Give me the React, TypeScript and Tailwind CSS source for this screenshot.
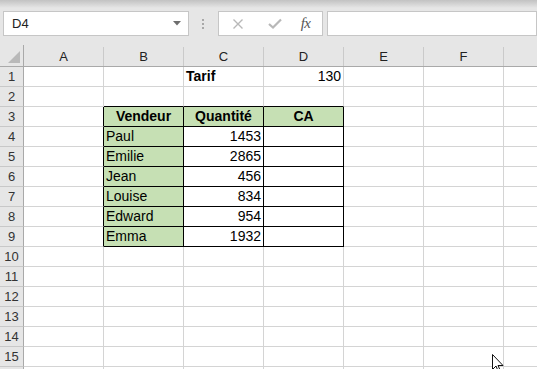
import React from "react";

const cols = ["A", "B", "C", "D", "E", "F", "G"];

type Cell = { text: string; bold?: boolean; align?: "left" | "right" | "center"; green?: boolean };

const data: Record<string, Cell> = {
  C1: { text: "Tarif", bold: true },
  D1: { text: "130", align: "right" },
  B3: { text: "Vendeur", bold: true, align: "center", green: true },
  C3: { text: "Quantité", bold: true, align: "center", green: true },
  D3: { text: "CA", bold: true, align: "center", green: true },
  B4: { text: "Paul", green: true },
  B5: { text: "Emilie", green: true },
  B6: { text: "Jean", green: true },
  B7: { text: "Louise", green: true },
  B8: { text: "Edward", green: true },
  B9: { text: "Emma", green: true },
  C4: { text: "1453", align: "right" },
  C5: { text: "2865", align: "right" },
  C6: { text: "456", align: "right" },
  C7: { text: "834", align: "right" },
  C8: { text: "954", align: "right" },
  C9: { text: "1932", align: "right" },
};

function GridCell({ col, row }: { col: string; row: number }) {
  const c = data[col + row];
  const inTable = row >= 3 && row <= 9;
  const tableCol = col === "B" || col === "C" || col === "D";
  const rightBlack = inTable && (tableCol || col === "A");
  const bottomBlack = tableCol && row >= 2 && row <= 9;
  return (
    <div
      className={
        "w-[80px] h-[20px] shrink-0 border-r border-b px-[2px] text-[14px] leading-[19px] text-black whitespace-nowrap overflow-hidden " +
        (rightBlack ? "border-r-black " : "border-r-[#d4d4d4] ") +
        (bottomBlack ? "border-b-black " : "border-b-[#d4d4d4] ") +
        (c?.green ? "bg-[#c6e0b4] " : "bg-white ") +
        (c?.bold ? "font-bold " : "") +
        (c?.align === "right" ? "text-right" : c?.align === "center" ? "text-center" : "text-left")
      }
    >
      {c?.text}
    </div>
  );
}

export default function App() {
  const rows = Array.from({ length: 16 }, (_, i) => i + 1);
  return (
    <div className="w-[537px] h-[369px] overflow-hidden bg-[#e6e6e6] relative font-['Liberation_Sans',Arial,sans-serif]">
      {/* toolbar */}
      <div className="h-[45px]">
        <div className="h-[8px] bg-gradient-to-b from-[#c2c2c2] to-[#e6e6e6]" />
        <div className="flex mt-[3px] h-[25px]">
          <div className="ml-[3px] w-[194px] border border-[#c6c6c6] bg-white flex items-center justify-between pl-[8px] pr-[7px]">
            <span className="text-[13px] text-[#222]">D4</span>
            <svg width="8" height="5" viewBox="0 0 8 5">
              <polygon points="0,0 8,0 4,4.5" fill="#6e6e6e" />
            </svg>
          </div>
          <div className="w-[30px] flex flex-col items-center justify-center gap-[2px]">
            <div className="w-[2px] h-[2px] bg-[#a8a8a8]" />
            <div className="w-[2px] h-[2px] bg-[#a8a8a8]" />
            <div className="w-[2px] h-[2px] bg-[#a8a8a8]" />
          </div>
          <div className="w-[110px] border border-[#c6c6c6] bg-white flex items-center">
            <svg width="12" height="12" viewBox="0 0 12 12" className="ml-[13px]">
              <path d="M1.5 1.5 L10.5 10.5 M10.5 1.5 L1.5 10.5" stroke="#b8b8b8" strokeWidth="1.4" />
            </svg>
            <svg width="14" height="11" viewBox="0 0 14 11" className="ml-[24px]">
              <path d="M1 6 L5 9.5 L13 1.5" stroke="#b8b8b8" strokeWidth="2.2" fill="none" />
            </svg>
            <span className="ml-[19px] text-[15px] italic text-[#555] font-['Liberation_Serif',serif] tracking-[-0.5px]">fx</span>
          </div>
          <div className="ml-[4px] w-[220px] border border-[#c6c6c6] bg-white" />
        </div>
      </div>

      {/* column headers */}
      <div className="flex h-[22px]">
        <div className="w-[24px] shrink-0 h-[22px] border-r border-b border-r-[#a9a9a9] border-b-[#a9a9a9] flex items-end justify-end pr-[3px] pb-[3px]">
          <svg width="12" height="12" viewBox="0 0 12 12">
            <polygon points="12,0 12,12 0,12" fill="#b9b9b9" />
          </svg>
        </div>
        {cols.map((c) => (
          <div
            key={c}
            className="w-[80px] shrink-0 h-[22px] border-b border-b-[#a9a9a9] flex"
          >
            <div className="flex-1 text-center text-[13px] leading-[21px] pt-[1px] text-[#222]">{c}</div>
            <div className="w-[1px] mt-[2px] bg-[#cacaca]" />
          </div>
        ))}
      </div>

      {/* rows */}
      {rows.map((r) => (
        <div key={r} className="flex h-[20px]">
          <div className="w-[24px] shrink-0 h-[20px] border-r border-b border-r-[#a9a9a9] border-b-[#c8c8c8] text-center text-[13px] leading-[19px] text-[#333]">
            {r}
          </div>
          {cols.map((c) => (
            <GridCell key={c} col={c} row={r} />
          ))}
        </div>
      ))}

      {/* mouse cursor */}
      <svg width="12" height="19" viewBox="0 0 12 19" className="absolute left-[492px] top-[354px]">
        <path d="M0.5 0.5 L0.5 15.5 L4 12 L6.5 18 L8.5 17 L6 11.5 L11 11.5 Z" fill="white" stroke="#111" strokeWidth="1" />
      </svg>
    </div>
  );
}
